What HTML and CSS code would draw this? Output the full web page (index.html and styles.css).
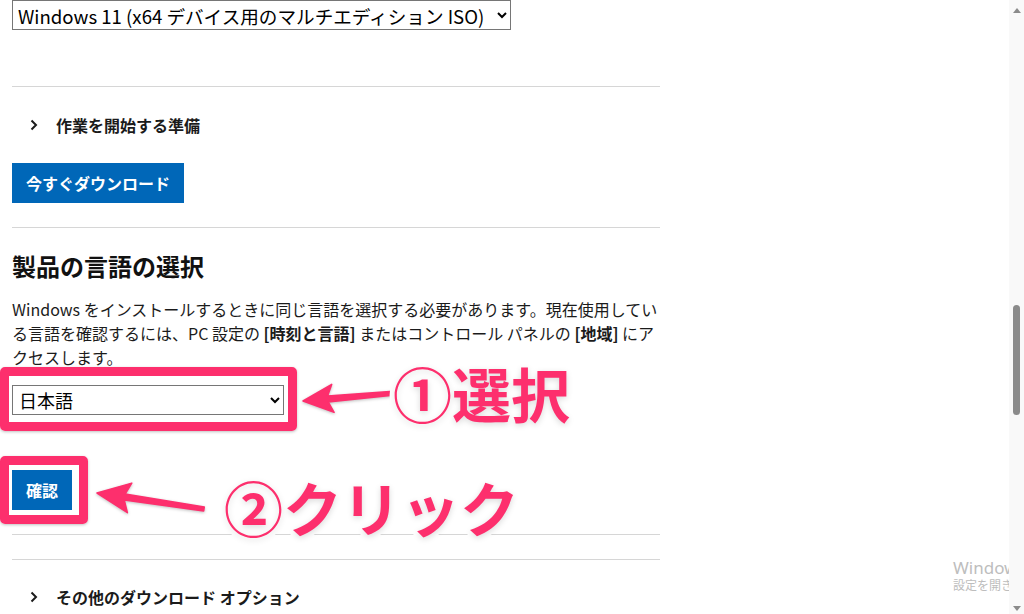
FILE: index.html
```html
<!DOCTYPE html>
<html lang="ja">
<head>
    <meta charset="UTF-8">
    <meta name="viewport" content="width=device-width, initial-scale=1.0">
    <title>Windows 11 のダウンロード</title>
    <link rel="stylesheet" href="styles.css">
</head>
<body>

<div class="window">
    <main class="page">
        <div class="content">
            <select class="edition" id="edition">
                <option>Windows 11 (x64 デバイス用のマルチエディション ISO)</option>
            </select>

            <section class="block block-prepare">
                <div class="expander">
                    <svg class="chevron" width="8" height="12" viewBox="0 0 8 12"><path d="M1.5 1.5l4.5 4.5-4.5 4.5"/></svg>
                    <span>作業を開始する準備</span>
                </div>
                <button type="button" class="btn btn-download">今すぐダウンロード</button>
            </section>

            <section class="block block-lang">
                <h2>製品の言語の選択</h2>
                <p>Windows をインストールするときに同じ言語を選択する必要があります。現在使用している言語を確認するには、PC 設定の <b>[時刻と言語]</b> またはコントロール パネルの <b>[地域]</b> にアクセスします。</p>
                <select class="lang-select" id="lang">
                    <option>日本語</option>
                </select>
                <button type="button" class="btn btn-confirm">確認</button>
            </section>

            <section class="block block-empty"></section>

            <section class="block block-more">
                <div class="expander">
                    <svg class="chevron" width="8" height="12" viewBox="0 0 8 12"><path d="M1.5 1.5l4.5 4.5-4.5 4.5"/></svg>
                    <span>その他のダウンロード オプション</span>
                </div>
            </section>
        </div>

        <!-- annotations -->
        <div class="mark mark-select"></div>
        <div class="mark mark-confirm"></div>
        <svg class="arrows" width="1009" height="614" viewBox="0 0 1009 614">
            <polygon points="303,401 331.7,384.4 327.6,395.9 389.8,391.5 390.2,395.5 328.2,401.9 334.1,412.4"/>
            <polygon points="97,493 131.8,483.1 125.1,494.1 204.3,507 203.7,511 124.3,500.1 127.4,512.7"/>
        </svg>
        <div class="note note-select">①選択</div>
        <div class="note note-confirm">②クリック</div>

        <div class="watermark">
            <div class="wm-title">Windows のライセンス認証</div>
            <div class="wm-sub">設定を開き、Windows のライセンス認証を行ってください。</div>
        </div>
    </main>

    <div class="scrollbar">
        <svg class="scroll-arrow" width="8" height="5" viewBox="0 0 8 5"><path d="M0 5L4 0 8 5z"/></svg>
        <div class="track">
            <div class="thumb"></div>
        </div>
        <svg class="scroll-arrow" width="8" height="5" viewBox="0 0 8 5"><path d="M0 0L4 5 8 0z"/></svg>
    </div>
</div>

</body>
</html>
```

FILE: styles.css
```css
* {
    box-sizing: border-box;
}
html, body {
    margin: 0;
    padding: 0;
    height: 100%;
}
body {
    font-family: "Noto Sans CJK JP", "Noto Sans", sans-serif;
    color: #1b1b1b;
    background-color: #fff;
    overflow: hidden;
}
.window {
    display: flex;
    height: 614px;
}
.page {
    position: relative;
    flex: 1;
    overflow: hidden;
}
.content {
    width: 648px;
    margin-left: 12px;
}

select {
    display: block;
    height: 30px;
    padding: 0 2px;
    font-family: inherit;
    color: #000;
    background-color: #fff;
    border: 1px solid #767676;
    border-radius: 0;
}
.edition {
    width: 499px;
    font-size: 18.6px;
    padding: 0 1px;
    margin-bottom: 56px;
}
.lang-select {
    width: 272px;
    font-size: 18px;
    margin-top: 16px;
}

.block {
    border-top: 1px solid #d6d6d6;
}
.block-prepare {
    padding: 26px 0 24px;
}
.block-lang {
    padding-bottom: 24px;
}
.block-empty {
    height: 25px;
}
.block-more {
    padding-top: 25px;
}

.expander {
    display: flex;
    align-items: center;
    gap: 18px;
    padding-left: 18px;
    font-size: 16px;
    font-weight: bold;
    line-height: 24px;
}
.chevron path {
    fill: none;
    stroke: #1b1b1b;
    stroke-width: 2;
}

.btn {
    display: block;
    padding: 0 14px;
    height: 40px;
    font-family: inherit;
    font-size: 16px;
    font-weight: bold;
    color: #fff;
    background-color: #0067b8;
    border: none;
    border-radius: 0;
    cursor: pointer;
}
.btn-download {
    margin-top: 26px;
}
.btn-confirm {
    margin-top: 55px;
}

h2 {
    margin: 22px 0 0;
    font-size: 24px;
    line-height: 32px;
    font-weight: bold;
    color: #111;
}
p {
    margin: 15px 0 0;
    font-size: 16px;
    line-height: 24px;
}

/* annotations */
.mark {
    position: absolute;
    left: 0;
    border: 9px solid #fd2f6d;
    border-radius: 5px;
    box-shadow: 0 1px 3px rgba(0, 0, 0, 0.25);
}
.mark-select {
    top: 367px;
    width: 297px;
    height: 64px;
}
.mark-confirm {
    top: 456px;
    width: 88px;
    height: 68px;
}
.arrows {
    position: absolute;
    top: 0;
    left: 0;
    pointer-events: none;
    filter: drop-shadow(0 1px 1.5px rgba(0, 0, 0, 0.25));
}
.arrows polygon {
    fill: #fd2f6d;
    stroke: #fd2f6d;
    stroke-width: 1.5;
    stroke-linejoin: round;
}
.note {
    position: absolute;
    font-size: 59px;
    line-height: 59px;
    font-weight: bold;
    color: #fd2f6d;
    white-space: nowrap;
    -webkit-text-stroke: 10px #fff;
    paint-order: stroke fill;
    text-shadow: 0 2px 6px rgba(0, 0, 0, 0.15);
}
.note-select {
    left: 393px;
    top: 363px;
}
.note-confirm {
    left: 224px;
    top: 477px;
}

.watermark {
    position: absolute;
    left: 953px;
    top: 559px;
    color: #bdbdbd;
    white-space: nowrap;
}
.wm-title {
    font-family: "Noto Sans", "Noto Sans CJK JP", sans-serif;
    font-size: 17px;
    line-height: 18px;
}
.wm-sub {
    font-size: 12px;
    line-height: 16px;
}

/* scrollbar */
.scrollbar {
    width: 15px;
    display: flex;
    flex-direction: column;
    align-items: center;
    padding: 8px 0 3px;
    background-color: #f9f9f9;
}
.scroll-arrow path {
    fill: #8b8b8b;
}
.track {
    flex: 1;
}
.thumb {
    width: 7px;
    height: 110px;
    margin-top: 292px;
    background-color: #8b8b8b;
    border-radius: 4px;
}
```
